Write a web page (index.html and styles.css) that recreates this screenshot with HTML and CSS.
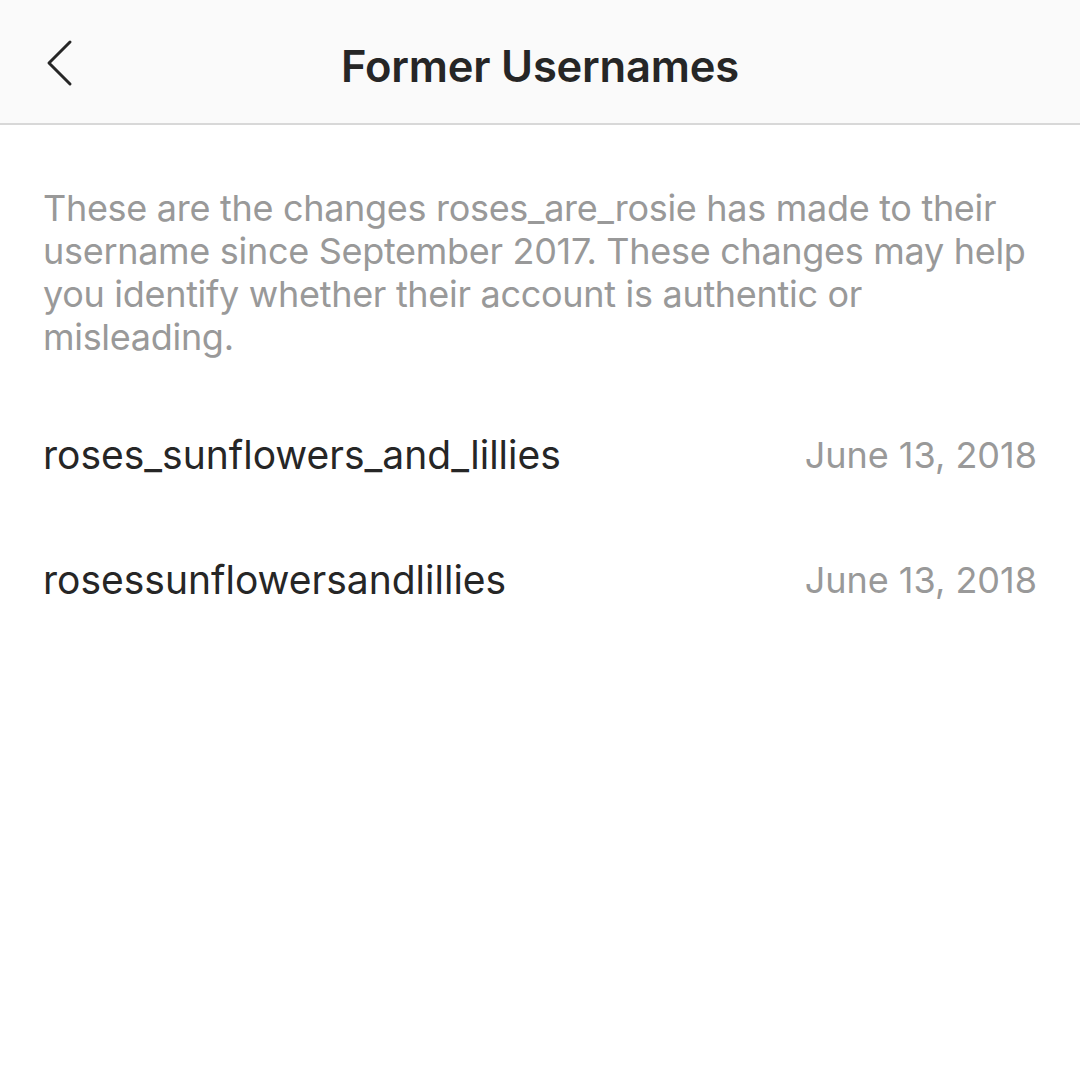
FILE: index.html
```html
<!DOCTYPE html>
<html lang="en">
<head>
    <meta charset="UTF-8">
    <title>Former Usernames</title>
    <link rel="stylesheet" href="styles.css">
</head>
<body>
    <div class="header">
        <button class="back-btn" aria-label="Back">
            <svg width="30" height="50" viewBox="0 0 30 50">
                <path d="M26 4 L5 25 L26 46" fill="none" stroke="#262626" stroke-width="3" stroke-linecap="round" stroke-linejoin="round"/>
            </svg>
        </button>
        <h1>Former Usernames</h1>
    </div>

    <div class="content">
        <p class="description">These are the changes roses_are_rosie has made to their username since September 2017. These changes may help you identify whether their account is authentic or misleading.</p>

        <div class="username-list">
            <div class="username-row">
                <span class="username">roses_sunflowers_and_lillies</span>
                <span class="date">June 13, 2018</span>
            </div>
            <div class="username-row">
                <span class="username">rosessunflowersandlillies</span>
                <span class="date">June 13, 2018</span>
            </div>
        </div>
    </div>
</body>
</html>
```

FILE: styles.css
```css
* {
    margin: 0;
    padding: 0;
    box-sizing: border-box;
}

body {
    font-family: Inter, 'Liberation Sans', sans-serif;
    background: #ffffff;
    color: #262626;
    width: 1080px;
    height: 1080px;
    overflow: hidden;
}

.header {
    height: 125px;
    background: #fafafa;
    border-bottom: 2px solid #d8d8d8;
    display: flex;
    align-items: center;
    justify-content: center;
    position: relative;
}

.back-btn {
    position: absolute;
    left: 44px;
    top: 38px;
    background: none;
    border: none;
    width: 30px;
    height: 50px;
}

.header h1 {
    font-size: 43.5px;
    font-weight: 600;
    color: #262626;
    letter-spacing: -0.2px;
    margin-top: 8px;
}

.content {
    padding: 62px 43px 0 43px;
}

.description {
    font-size: 36px;
    line-height: 43px;
    letter-spacing: -0.3px;
    color: #999999;
}

.username-list {
    margin-top: 33px;
}

.username-row {
    display: flex;
    justify-content: space-between;
    align-items: center;
    height: 125px;
}

.username {
    font-size: 39px;
    color: #262626;
}

.date {
    font-size: 36px;
    color: #999999;
}
```
